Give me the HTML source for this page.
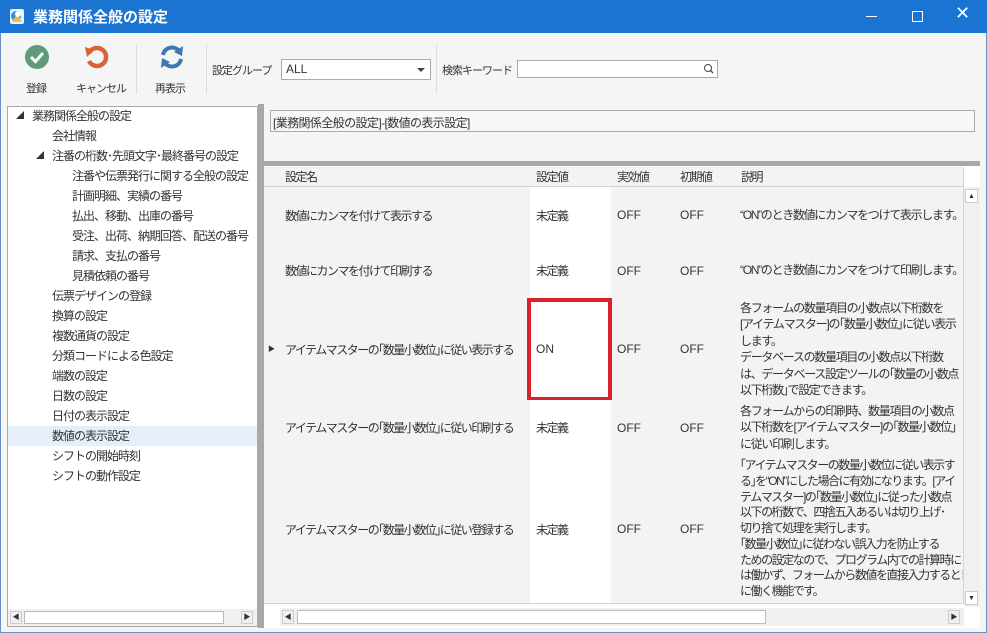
<!DOCTYPE html>
<html><head><meta charset="utf-8"><style>
*{box-sizing:border-box;margin:0;padding:0}
body{width:987px;height:633px;position:relative;background:#f5f5f5;font-family:"Liberation Sans","Noto Sans CJK JP",sans-serif;font-size:12px;color:#333;overflow:hidden}
.a{position:absolute}
.tb{left:0;top:0;width:987px;height:33px;background:#1c74d2;color:#fff}
.tree div{position:absolute;height:20px;line-height:20px;white-space:nowrap;letter-spacing:-1px}
.cell{position:absolute;border-right:1px solid #d4d4d4;border-bottom:1px solid #d4d4d4;background:#f3f3f3;display:flex;align-items:center;padding-left:6px;white-space:nowrap;letter-spacing:-1.5px;overflow:hidden}
.w{background:#fff}
.o{letter-spacing:0}
.desc{padding-left:5px;line-height:16.5px;letter-spacing:-1.3px}
.tl{letter-spacing:-1px}
</style></head><body>
<div class="a" style="left:0;top:0;width:987px;height:633px;border:1px solid #6a8fc0"></div>
<div class="a tb">
 <svg class="a" style="left:9px;top:8px" width="16" height="17"><rect x="1" y="1" width="14" height="15" rx="2" fill="#e8f2f8"/><circle cx="7" cy="8" r="5" fill="#3a8fd0"/><path d="M3 14 L8 6 L13 14Z" fill="#f0c040"/><circle cx="9" cy="6" r="3" fill="#fff"/></svg>
 <div class="a" style="left:33px;top:6px;font-size:15px;font-weight:bold">業務関係全般の設定</div>
 <div class="a" style="left:866px;top:16px;width:11px;height:1px;background:#fff"></div>
 <div class="a" style="left:912px;top:11px;width:11px;height:11px;border:1px solid #fff"></div>
 <div class="a" style="left:955px;top:3px;font-size:18px">✕</div>
</div>
<svg class="a" style="left:24px;top:44px" width="26" height="26"><circle cx="13" cy="13" r="12" fill="#5e9a7b"/><path d="M7 13 L11.5 17.5 L19 9" stroke="#fff" stroke-width="3" fill="none"/></svg>
<div class="a tl" style="left:26px;top:80px;font-size:11px">登録</div>
<svg class="a" style="left:83px;top:44px" width="26" height="26"><path d="M6 9 A9 9 0 1 1 6 17" stroke="#d6643a" stroke-width="4.5" fill="none"/><path d="M2 3 L11 6 L4 13Z" fill="#d6643a"/></svg>
<div class="a tl" style="left:76px;top:80px;font-size:11px">キャンセル</div>
<div class="a" style="left:136px;top:44px;width:1px;height:50px;background:#ddd"></div>
<svg class="a" style="left:159px;top:44px" width="26" height="26"><path d="M4 11 A9 9 0 0 1 20 7" stroke="#3d78b5" stroke-width="4" fill="none"/><path d="M24 2 L23 12 L15 8Z" fill="#3d78b5"/><path d="M22 15 A9 9 0 0 1 6 19" stroke="#3d78b5" stroke-width="4" fill="none"/><path d="M2 24 L3 14 L11 18Z" fill="#3d78b5"/></svg>
<div class="a tl" style="left:155px;top:80px;font-size:11px">再表示</div>
<div class="a" style="left:206px;top:44px;width:1px;height:50px;background:#ddd"></div>
<div class="a tl" style="left:212px;top:62px;font-size:11px">設定グループ</div>
<div class="a" style="left:281px;top:59px;width:150px;height:21px;border:1px solid #aaa;background:#fff;padding:2px 4px">ALL</div>
<div class="a" style="left:417px;top:68px;border-left:4px solid transparent;border-right:4px solid transparent;border-top:4px solid #444"></div>
<div class="a" style="left:436px;top:44px;width:1px;height:50px;background:#ddd"></div>
<div class="a tl" style="left:442px;top:62px;font-size:11px">検索キーワード</div>
<div class="a" style="left:517px;top:60px;width:201px;height:18px;border:1px solid #aaa;background:#fff"></div>
<svg class="a" style="left:703px;top:63px" width="12" height="12"><circle cx="5" cy="5" r="3.5" stroke="#444" fill="none"/><path d="M7.5 7.5 L10 10" stroke="#444" stroke-width="1.3"/></svg>
<div class="a" style="left:7px;top:106px;width:251px;height:521px;border:1px solid #aaa;background:#fff"></div>
<div class="a" style="left:8px;top:426px;width:249px;height:20px;background:#e5eff9"></div>
<div class="tree">
<div style="left:16px;top:106px;font-size:8px">◢</div><div style="left:32px;top:106px">業務関係全般の設定</div>
<div style="left:52px;top:126px">会社情報</div>
<div style="left:36px;top:146px;font-size:8px">◢</div><div style="left:52px;top:146px">注番の桁数･先頭文字･最終番号の設定</div>
<div style="left:72px;top:166px">注番や伝票発行に関する全般の設定</div>
<div style="left:72px;top:186px">計画明細、実績の番号</div>
<div style="left:72px;top:206px">払出、移動、出庫の番号</div>
<div style="left:72px;top:226px">受注、出荷、納期回答、配送の番号</div>
<div style="left:72px;top:246px">請求、支払の番号</div>
<div style="left:72px;top:266px">見積依頼の番号</div>
<div style="left:52px;top:286px">伝票デザインの登録</div>
<div style="left:52px;top:306px">換算の設定</div>
<div style="left:52px;top:326px">複数通貨の設定</div>
<div style="left:52px;top:346px">分類コードによる色設定</div>
<div style="left:52px;top:366px">端数の設定</div>
<div style="left:52px;top:386px">日数の設定</div>
<div style="left:52px;top:406px">日付の表示設定</div>
<div style="left:52px;top:426px">数値の表示設定</div>
<div style="left:52px;top:446px">シフトの開始時刻</div>
<div style="left:52px;top:466px">シフトの動作設定</div>
</div>
<div class="a" style="left:8px;top:609px;width:249px;height:17px;background:#f0f0f0"></div>
<div class="a" style="left:10px;top:611px;width:12px;height:13px;border:1px solid #ccc;font-size:7px;text-align:center;line-height:12px">◀</div>
<div class="a" style="left:24px;top:611px;width:200px;height:13px;border:1px solid #bbb;background:#fff"></div>
<div class="a" style="left:241px;top:611px;width:12px;height:13px;border:1px solid #ccc;font-size:7px;text-align:center;line-height:12px">▶</div>
<div class="a" style="left:258px;top:104px;width:6px;height:524px;background:#a8a8a8"></div>
<div class="a" style="left:264px;top:161px;width:716px;height:5px;background:#a8a8a8"></div>
<div class="a" style="left:270px;top:110px;width:705px;height:22px;border:1px solid #aaa;background:#f7f7f7;padding:3px 2px;letter-spacing:-0.6px">[業務関係全般の設定]-[数値の表示設定]</div>
<div class="a" style="left:264px;top:166px;width:716px;height:462px;background:#fff"></div>
<div class="cell" style="left:264px;top:167px;width:16px;height:20px"></div>
<div class="cell" style="left:279px;top:167px;width:252px;height:20px">設定名</div>
<div class="cell" style="left:530px;top:167px;width:82px;height:20px">設定値</div>
<div class="cell" style="left:611px;top:167px;width:64px;height:20px">実効値</div>
<div class="cell" style="left:674px;top:167px;width:62px;height:20px">初期値</div>
<div class="cell" style="left:735px;top:167px;width:229px;height:20px">説明</div>

<div class="cell" style="left:264px;top:187px;width:16px;height:57px"></div>
<div class="cell" style="left:279px;top:187px;width:252px;height:57px">数値にカンマを付けて表示する</div>
<div class="cell w" style="left:530px;top:187px;width:82px;height:57px">未定義</div>
<div class="cell o" style="left:611px;top:187px;width:64px;height:57px">OFF</div>
<div class="cell o" style="left:674px;top:187px;width:62px;height:57px">OFF</div>
<div class="cell desc" style="left:735px;top:187px;width:229px;height:57px">“ON”のとき数値にカンマをつけて表示します。</div>

<div class="cell" style="left:264px;top:243px;width:16px;height:56px"></div>
<div class="cell" style="left:279px;top:243px;width:252px;height:56px">数値にカンマを付けて印刷する</div>
<div class="cell w" style="left:530px;top:243px;width:82px;height:56px">未定義</div>
<div class="cell o" style="left:611px;top:243px;width:64px;height:56px">OFF</div>
<div class="cell o" style="left:674px;top:243px;width:62px;height:56px">OFF</div>
<div class="cell desc" style="left:735px;top:243px;width:229px;height:56px">“ON”のとき数値にカンマをつけて印刷します。</div>

<div class="cell" style="left:264px;top:298px;width:16px;height:103px;font-size:7px;padding-left:4px">▶</div>
<div class="cell" style="left:279px;top:298px;width:252px;height:103px">アイテムマスターの｢数量小数位｣に従い表示する</div>
<div class="cell w o" style="left:530px;top:298px;width:82px;height:103px">ON</div>
<div class="cell o" style="left:611px;top:298px;width:64px;height:103px">OFF</div>
<div class="cell o" style="left:674px;top:298px;width:62px;height:103px">OFF</div>
<div class="cell desc" style="left:735px;top:298px;width:229px;height:103px">各フォームの数量項目の小数点以下桁数を<br>[アイテムマスター]の｢数量小数位｣に従い表示<br>します。<br>データベースの数量項目の小数点以下桁数<br>は、データベース設定ツールの｢数量の小数点<br>以下桁数｣で設定できます。</div>
<div class="a" style="left:527px;top:298px;width:85px;height:103px;border:4px solid #d9222a"></div>

<div class="cell" style="left:264px;top:400px;width:16px;height:56px"></div>
<div class="cell" style="left:279px;top:400px;width:252px;height:56px">アイテムマスターの｢数量小数位｣に従い印刷する</div>
<div class="cell w" style="left:530px;top:400px;width:82px;height:56px">未定義</div>
<div class="cell o" style="left:611px;top:400px;width:64px;height:56px">OFF</div>
<div class="cell o" style="left:674px;top:400px;width:62px;height:56px">OFF</div>
<div class="cell desc" style="left:735px;top:400px;width:229px;height:56px">各フォームからの印刷時、数量項目の小数点<br>以下桁数を[アイテムマスター]の｢数量小数位｣<br>に従い印刷します。</div>

<div class="cell" style="left:264px;top:455px;width:16px;height:149px"></div>
<div class="cell" style="left:279px;top:455px;width:252px;height:149px">アイテムマスターの｢数量小数位｣に従い登録する</div>
<div class="cell w" style="left:530px;top:455px;width:82px;height:149px">未定義</div>
<div class="cell o" style="left:611px;top:455px;width:64px;height:149px">OFF</div>
<div class="cell o" style="left:674px;top:455px;width:62px;height:149px">OFF</div>
<div class="cell desc" style="left:735px;top:455px;width:229px;height:149px;line-height:15.8px;letter-spacing:-1.45px">｢アイテムマスターの数量小数位に従い表示す<br>る｣を“ON”にした場合に有効になります。[アイ<br>テムマスター]の｢数量小数位｣に従った小数点<br>以下の桁数で、四捨五入あるいは切り上げ･<br>切り捨て処理を実行します。<br>｢数量小数位｣に従わない誤入力を防止する<br>ための設定なので、プログラム内での計算時に<br>は働かず、フォームから数値を直接入力するとき<br>に働く機能です。</div>
<div class="a" style="left:964px;top:187px;width:16px;height:420px;background:#f0f0f0"></div>
<div class="a" style="left:965px;top:189px;width:13px;height:14px;border:1px solid #ccc;background:#fff;font-size:7px;text-align:center;line-height:13px">▲</div>
<div class="a" style="left:965px;top:591px;width:13px;height:14px;border:1px solid #ccc;background:#fff;font-size:7px;text-align:center;line-height:13px">▼</div>
<div class="a" style="left:280px;top:608px;width:684px;height:18px;background:#f0f0f0"></div>
<div class="a" style="left:282px;top:610px;width:12px;height:14px;border:1px solid #ccc;font-size:7px;text-align:center;line-height:13px">◀</div>
<div class="a" style="left:297px;top:610px;width:469px;height:14px;border:1px solid #bbb;background:#fff"></div>
<div class="a" style="left:948px;top:610px;width:12px;height:14px;border:1px solid #ccc;font-size:7px;text-align:center;line-height:13px">▶</div>
</body></html>
